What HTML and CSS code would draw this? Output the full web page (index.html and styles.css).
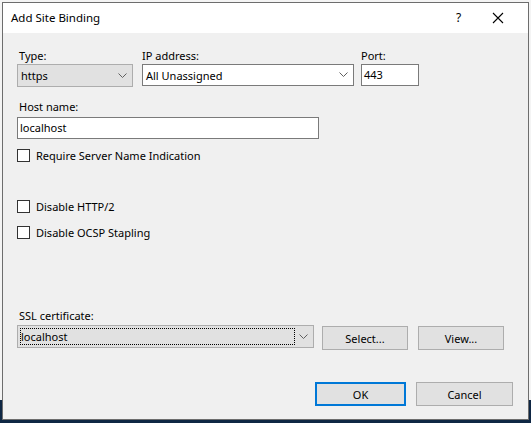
FILE: index.html
```html
<!DOCTYPE html>
<html>
<head>
<meta charset="utf-8">
<link rel="stylesheet" href="styles.css">
</head>
<body>
<div class="desktop">
  <div class="window">
    <div class="titlebar">
      <span class="title">Add Site Binding</span>
      <span class="help">?</span>
      <span class="close">
        <svg width="12" height="12" viewBox="0 0 12 12"><path d="M1 1 L11 11 M11 1 L1 11" stroke="#000" stroke-width="1.1" fill="none"/></svg>
      </span>
    </div>
    <div class="content">
      <div class="row1">
        <div class="field f-type">
          <div class="label">Type:</div>
          <div class="combo combo-gray"><span class="val">https</span><svg class="chev" width="9" height="5" viewBox="0 0 9 5"><path d="M0.5 0.5 L4.5 4.5 L8.5 0.5" stroke="#606060" stroke-width="1" fill="none"/></svg></div>
        </div>
        <div class="field f-ip">
          <div class="label">IP address:</div>
          <div class="combo combo-white"><span class="val">All Unassigned</span><svg class="chev" width="9" height="5" viewBox="0 0 9 5"><path d="M0.5 0.5 L4.5 4.5 L8.5 0.5" stroke="#606060" stroke-width="1" fill="none"/></svg></div>
        </div>
        <div class="field f-port">
          <div class="label">Port:</div>
          <div class="input port">443</div>
        </div>
      </div>
      <div class="label host-label">Host name:</div>
      <div class="input host">localhost</div>
      <div class="check c1"><span class="box"></span><span>Require Server Name Indication</span></div>
      <div class="check c2"><span class="box"></span><span>Disable HTTP/2</span></div>
      <div class="check c3"><span class="box"></span><span>Disable OCSP Stapling</span></div>
      <div class="label ssl-label">SSL certificate:</div>
      <div class="ssl-row">
        <div class="combo combo-gray ssl"><span class="focus">localhost</span><svg class="chev" width="9" height="5" viewBox="0 0 9 5"><path d="M0.5 0.5 L4.5 4.5 L8.5 0.5" stroke="#606060" stroke-width="1" fill="none"/></svg></div>
        <div class="btn b-select">Select...</div>
        <div class="btn b-view">View...</div>
      </div>
      <div class="footer">
        <div class="btn b-ok">OK</div>
        <div class="btn b-cancel">Cancel</div>
      </div>
    </div>
  </div>
</div>
</body>
</html>
```
FILE: styles.css
```css
html, body {
  margin: 0;
  padding: 0;
}
body {
  width: 531px;
  height: 423px;
  overflow: hidden;
  background: linear-gradient(to bottom, #f4f4f4 0, #f4f4f4 400px, #0f2744 400px);
  font-family: "Noto Sans", "Open Sans", sans-serif;
  font-size: 11px;
  color: #000;
}
.desktop {
  padding: 2px 0 0 2px;
}
.window {
  width: 525px;
  height: 416px;
  border: 1px solid #6d6d6d;
  background: #f0f0f0;
}
.titlebar {
  height: 30px;
  background: #fff;
  display: flex;
  align-items: center;
  position: relative;
}
.title {
  margin-left: 8px;
  font-size: 11.5px;
  margin-top: -1px;
}
.help {
  position: absolute;
  left: 453px;
  top: 6px;
  font-size: 12px;
}
.close {
  position: absolute;
  left: 489px;
  top: 9px;
  line-height: 0;
}
.content {
  padding: 15px 0 0 14px;
}
.label {
  line-height: 15px;
  height: 15px;
  padding-left: 2px;
}
.row1 {
  display: flex;
  height: 39px;
}
.field .label {
  margin-bottom: 1px;
}
.f-type { width: 116px; }
.f-ip { width: 212px; margin-left: 9px; }
.f-port { width: 58px; margin-left: 7px; }
.f-ip .label, .f-port .label { padding-left: 0; }
.combo {
  box-sizing: border-box;
  display: flex;
  align-items: center;
  position: relative;
  line-height: 15px;
}
.combo-gray {
  height: 23px;
  background: #e1e1e1;
  border: 1px solid #adadad;
  padding-left: 3px;
}
.combo-white {
  height: 22px;
  margin-top: 1px;
  background: #fff;
  border: 1px solid #7a7a7a;
  padding-left: 3px;
}
.chev {
  position: absolute;
  right: 5px;
  top: 8px;
}
.combo-white .chev { top: 7px; }
.input {
  box-sizing: border-box;
  height: 22px;
  background: #fff;
  border: 1px solid #7a7a7a;
  line-height: 20px;
  padding-left: 2px;
}
.port {
  margin-top: 1px;
}
.host-label {
  margin-top: 12px;
}
.host {
  width: 302px;
  margin-top: 3px;
}
.check {
  display: flex;
  align-items: center;
  height: 15px;
  line-height: 15px;
}
.box {
  box-sizing: border-box;
  width: 13px;
  height: 13px;
  border: 1px solid #333;
  background: #fff;
  margin-right: 6px;
}
.c1 { margin-top: 9px; }
.c2 { margin-top: 36px; }
.c3 { margin-top: 11px; }
.ssl-label {
  margin-top: 68px;
}
.ssl-row {
  display: flex;
  margin-top: 2px;
  height: 26px;
}
.ssl {
  width: 297px;
  padding-left: 2px;
}
.focus {
  box-sizing: border-box;
  width: 275px;
  height: 17px;
  border: 1px dotted #000;
  line-height: 15px;
  padding-left: 0;
}
.btn {
  box-sizing: border-box;
  height: 24px;
  background: #e1e1e1;
  border: 1px solid #adadad;
  display: flex;
  align-items: center;
  justify-content: center;
  line-height: 15px;
}
.b-select {
  width: 86px;
  margin-left: 8px;
  margin-top: 1px;
}
.b-view {
  width: 86px;
  margin-left: 10px;
  margin-top: 1px;
}
.footer {
  display: flex;
  margin-top: 31px;
  padding-left: 298px;
}
.b-ok {
  width: 91px;
  border: 2px solid #0078d7;
}
.b-cancel {
  width: 97px;
  margin-left: 10px;
}
```
